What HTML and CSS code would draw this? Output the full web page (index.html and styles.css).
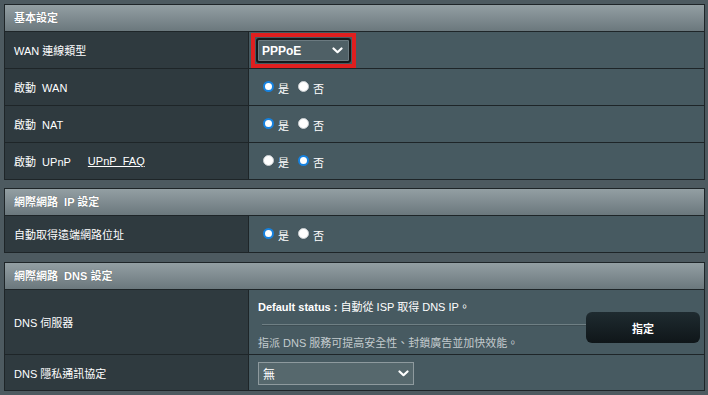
FILE: index.html
```html
<!DOCTYPE html>
<html>
<head>
<meta charset="utf-8">
<link rel="stylesheet" href="styles.css">
</head>
<body>
<div class="page">
  <div class="panel panel-a">
    <div class="panel-head">基本設定</div>
    <div class="row">
      <div class="label">WAN 連線類型</div>
      <div class="value">
        <div class="focus-ring">
          <div class="select select-dark">
            <span>PPPoE</span>
            <svg class="chev" width="11" height="7" viewBox="0 0 11 7"><polyline points="1.5,1.5 5.5,5.2 9.5,1.5" fill="none" stroke="#fff" stroke-width="2.2" stroke-linecap="round" stroke-linejoin="round"/></svg>
          </div>
        </div>
      </div>
    </div>
    <div class="row">
      <div class="label">啟動&nbsp;&nbsp;WAN</div>
      <div class="value">
        <div class="radios"><span class="radio on"></span><span class="rl">是</span><span class="radio"></span><span class="rl">否</span></div>
      </div>
    </div>
    <div class="row">
      <div class="label">啟動&nbsp;&nbsp;NAT</div>
      <div class="value">
        <div class="radios"><span class="radio on"></span><span class="rl">是</span><span class="radio"></span><span class="rl">否</span></div>
      </div>
    </div>
    <div class="row">
      <div class="label">啟動&nbsp;&nbsp;UPnP <a class="faq">UPnP&nbsp;&nbsp;FAQ</a></div>
      <div class="value">
        <div class="radios"><span class="radio"></span><span class="rl">是</span><span class="radio on"></span><span class="rl">否</span></div>
      </div>
    </div>
  </div>

  <div class="panel panel-b">
    <div class="panel-head">網際網路&nbsp;&nbsp;IP 設定</div>
    <div class="row">
      <div class="label">自動取得遠端網路位址</div>
      <div class="value">
        <div class="radios"><span class="radio on"></span><span class="rl">是</span><span class="radio"></span><span class="rl">否</span></div>
      </div>
    </div>
  </div>

  <div class="panel">
    <div class="panel-head">網際網路&nbsp;&nbsp;DNS 設定</div>
    <div class="row row-tall">
      <div class="label">DNS 伺服器</div>
      <div class="value dns">
        <div class="dns-info">
          <div class="status"><b>Default status :</b> 自動從 ISP 取得 DNS IP。</div>
          <div class="sep"></div>
          <div class="hint">指派 DNS 服務可提高安全性、封鎖廣告並加快效能。</div>
        </div>
        <div class="btn">指定</div>
      </div>
    </div>
    <div class="row row-last">
      <div class="label">DNS 隱私通訊協定</div>
      <div class="value">
        <div class="select select-light">
          <span>無</span>
          <svg class="chev" width="11" height="7" viewBox="0 0 11 7"><polyline points="1.5,1.5 5.5,5.2 9.5,1.5" fill="none" stroke="#fff" stroke-width="2.2" stroke-linecap="round" stroke-linejoin="round"/></svg>
        </div>
      </div>
    </div>
  </div>
</div>
</body>
</html>
```

FILE: styles.css
```css
html, body {
  margin: 0;
  padding: 0;
  background: #4d5a60;
}
body {
  font-family: "Liberation Sans", "Noto Sans CJK TC", Arial, sans-serif;
  font-size: 11px;
  color: #ffffff;
}
.page {
  padding: 4px 3px 0 4px;
}
.panel {
  border: 1px solid #1e2528;
  background: #475a61;
}
.panel-a {
  margin-bottom: 8px;
}
.panel-b {
  margin-bottom: 9px;
}
.panel-head {
  height: 26px;
  line-height: 26px;
  padding-left: 9px;
  font-weight: bold;
  font-size: 11px;
  color: #ffffff;
  background: linear-gradient(#939fa3, #6b787d);
  border-bottom: 1px solid #1e2528;
  text-shadow: 0 0 1px rgba(0,0,0,0.4);
}
.row {
  display: grid;
  grid-template-columns: 244px 1fr;
  height: 36px;
  border-bottom: 1px solid #1e2528;
}
.row:last-child {
  border-bottom: none;
}
.row-tall {
  height: 64px;
}
.row-last {
  height: 35px;
}
.label {
  background: #2f3a3f;
  border-right: 1px solid #1e2528;
  display: flex;
  align-items: center;
  padding-left: 9px;
  font-size: 11px;
}
.faq {
  margin-left: 17px;
  color: #ffffff;
  text-decoration: underline;
  font-size: 11px;
}
.value {
  display: flex;
  align-items: center;
  padding-left: 8px;
  background: #475a61;
}
.focus-ring {
  border: 4px solid #e01f1f;
  padding: 1px;
  margin-left: -6px;
  margin-top: 1px;
}
.select {
  display: flex;
  align-items: center;
  justify-content: space-between;
  box-sizing: border-box;
  font-size: 12px;
}
.select-dark {
  width: 95px;
  height: 25px;
  border: 2px solid #151a1c;
  border-radius: 3px;
  background: #4f6066;
  padding: 0 6px 0 4px;
  font-weight: bold;
  box-shadow: inset 0 0 0 1px #6b7a80;
}
.select-light {
  width: 156px;
  height: 23px;
  border: 1px solid #8e9a9e;
  background: #56686d;
  padding: 0 4px 0 4px;
  margin-left: 1px;
  margin-top: 1px;
}
.chev {
  display: block;
}
.radios {
  display: flex;
  align-items: center;
  padding-left: 6px;
  margin-top: -1px;
}
.radio {
  box-sizing: border-box;
  width: 11px;
  height: 11px;
  border-radius: 50%;
  background: #ffffff;
  border: 1px solid #c8cdd0;
}
.radio.on {
  border: 2.5px solid #1682e0;
}
.rl {
  margin-left: 4px;
  margin-right: 9px;
  font-size: 11px;
  position: relative;
  top: 1px;
}
.dns {
  padding-left: 9px;
  padding-right: 4px;
}
.dns-info {
  flex: 1;
  align-self: stretch;
  display: flex;
  flex-direction: column;
}
.status {
  margin-top: 8px;
  font-size: 11px;
}
.status b {
  font-weight: bold;
}
.sep {
  margin-top: 10px;
  margin-left: 4px;
  margin-right: -10px;
  height: 1px;
  background: #6f7f84;
  border-bottom: 1px solid #3e4e54;
}
.hint {
  margin-top: 8px;
  color: #c3cbce;
  font-size: 11px;
}
.btn {
  width: 114px;
  height: 31px;
  margin-top: 11px;
  border-radius: 6px;
  background: linear-gradient(#1f2b30, #0f1619);
  display: flex;
  align-items: center;
  justify-content: center;
  font-weight: bold;
  font-size: 11px;
  color: #ffffff;
  flex-shrink: 0;
}
```
